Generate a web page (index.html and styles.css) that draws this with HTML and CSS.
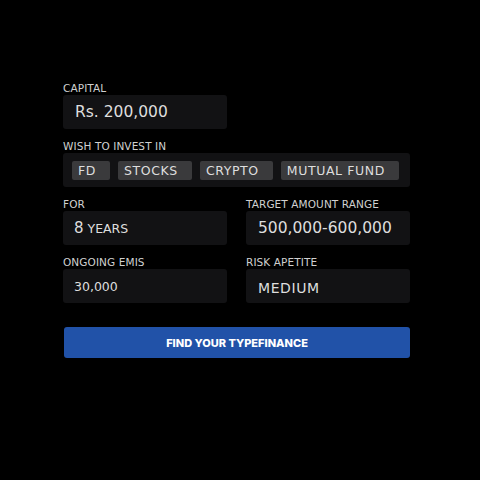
FILE: index.html
```html
<!DOCTYPE html>
<html lang="en">

<head>
    <meta charset="UTF-8">
    <meta name="viewport" content="width=device-width, initial-scale=1.0">
    <title>TypeFinance</title>
    <link rel="stylesheet" href="styles.css">
</head>

<body>
    <div class="form">
        <div class="field">
            <label class="field-label">CAPITAL</label>
            <div class="box half value-lg">Rs. 200,000</div>
        </div>

        <div class="field">
            <label class="field-label">WISH TO INVEST IN</label>
            <div class="box chips">
                <span class="chip">FD</span>
                <span class="chip">STOCKS</span>
                <span class="chip">CRYPTO</span>
                <span class="chip">MUTUAL FUND</span>
            </div>
        </div>

        <div class="row">
            <div class="field">
                <label class="field-label">FOR</label>
                <div class="box value-md"><span class="num">8</span>&nbsp;YEARS</div>
            </div>
            <div class="field">
                <label class="field-label">TARGET AMOUNT RANGE</label>
                <div class="box value-lg">500,000-600,000</div>
            </div>
        </div>

        <div class="row">
            <div class="field">
                <label class="field-label">ONGOING EMIS</label>
                <div class="box value-sm">30,000</div>
            </div>
            <div class="field">
                <label class="field-label">RISK APETITE</label>
                <div class="box value-caps">MEDIUM</div>
            </div>
        </div>

        <button class="submit">FIND YOUR TYPEFINANCE</button>
    </div>
</body>

</html>
```

FILE: styles.css
```css
body {
    margin: 0;
    background-color: #000;
    font-family: "DejaVu Sans", sans-serif;
    color: #dedede;
}

.form {
    width: 347px;
    margin-left: 63px;
    padding-top: 82px;
}

.field {
    margin-bottom: 11px;
}

.field-label {
    display: block;
    height: 12px;
    margin-bottom: 1px;
    font-size: 10.5px;
    line-height: 12px;
    color: #d0d0d0;
    letter-spacing: 0.1px;
}

.box {
    display: flex;
    align-items: center;
    height: 34px;
    padding: 0 12px;
    background: #121214;
    border-radius: 3px;
    box-sizing: border-box;
}

.half {
    width: 164px;
}

.row {
    display: grid;
    grid-template-columns: 164px 164px;
    column-gap: 19px;
}

.value-lg {
    font-size: 15.5px;
}

.value-md {
    font-size: 12.5px;
    padding-left: 11px;
}

.value-md .num {
    font-size: 15px;
}

.value-sm {
    font-size: 12.5px;
    padding-left: 11px;
}

.value-caps {
    padding-top: 4px;
    font-size: 14px;
    letter-spacing: 0.6px;
}

.chips {
    gap: 8px;
    padding: 0 9px;
}

.chip {
    display: flex;
    align-items: center;
    height: 19px;
    padding: 0 14px 0 6px;
    background: #3a3a3c;
    border-radius: 2px;
    font-size: 12.5px;
    letter-spacing: 0.6px;
}

.submit {
    display: block;
    width: 346px;
    height: 31px;
    margin-top: 13px;
    margin-left: 1px;
    border: none;
    border-radius: 3px;
    background: #2152a8;
    color: #fff;
    font-family: Inter, sans-serif;
    font-weight: 800;
    font-size: 11px;
}
```
